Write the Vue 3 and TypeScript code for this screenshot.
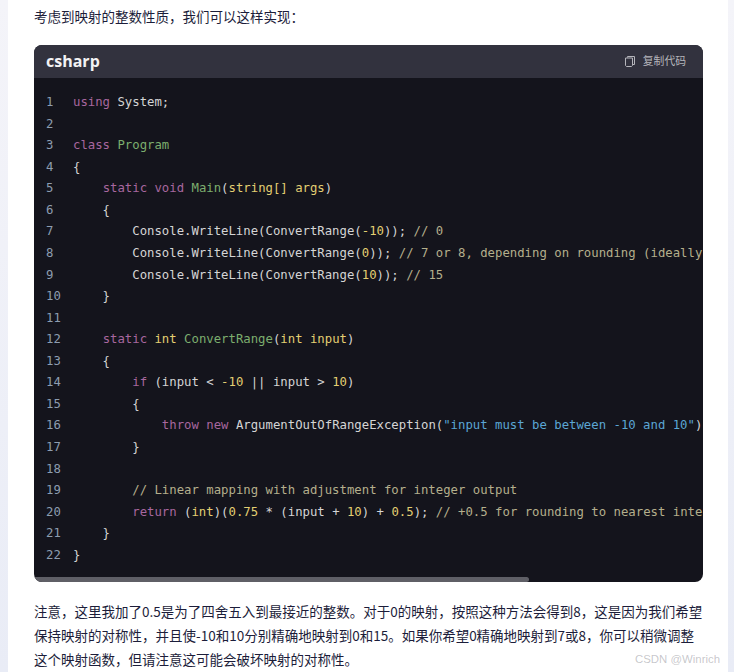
<script setup lang="ts">
type Tok = [string, string];
const k = (t: string): Tok => ['kw', t];
const p = (t: string): Tok => ['pl', t];
const y = (t: string): Tok => ['yl', t];
const g = (t: string): Tok => ['gr', t];
const c = (t: string): Tok => ['cm', t];
const s = (t: string): Tok => ['st', t];

const lines: Tok[][] = [
  [k('using'), p(' System;')],
  [],
  [k('class'), p(' '), g('Program')],
  [p('{')],
  [p('    '), k('static'), p(' '), k('void'), p(' '), g('Main'), p('('), y('string[] args'), p(')')],
  [p('    {')],
  [p('        Console.WriteLine(ConvertRange('), y('-10'), p(')); '), c('// 0')],
  [p('        Console.WriteLine(ConvertRange('), y('0'), p(')); '), c('// 7 or 8, depending on rounding (ideally')],
  [p('        Console.WriteLine(ConvertRange('), y('10'), p(')); '), c('// 15')],
  [p('    }')],
  [],
  [p('    '), k('static'), p(' '), y('int'), p(' '), g('ConvertRange'), p('('), y('int input'), p(')')],
  [p('    {')],
  [p('        '), k('if'), p(' (input < '), y('-10'), p(' || input > '), y('10'), p(')')],
  [p('        {')],
  [p('            '), k('throw'), p(' '), k('new'), p(' ArgumentOutOfRangeException('), s('"input must be between -10 and 10"'), p(')')],
  [p('        }')],
  [],
  [p('        '), c('// Linear mapping with adjustment for integer output')],
  [p('        '), k('return'), p(' ('), y('int'), p(')('), y('0.75'), p(' * (input + '), y('10'), p(') + '), y('0.5'), p('); '), c('// +0.5 for rounding to nearest inte')],
  [p('    }')],
  [p('}')],
];
</script>

<template>
  <div class="page">
    <article class="card">
      <p class="intro">考虑到映射的整数性质，我们可以这样实现：</p>
      <section class="block">
        <header class="head">
          <span class="lang">csharp</span>
          <span class="copy">
            <svg class="copy-icon" width="12" height="12" viewBox="0 0 12 12" fill="none" stroke="currentColor" stroke-width="1">
              <path d="M3.5 2.5V1.5H10.5V9.5H9" />
              <path d="M1.5 3H8.5V10.5L7.5 11.5H2.5L1.5 10.5Z" />
            </svg>
            复制代码
          </span>
        </header>
        <div class="body">
          <div v-for="(line, i) in lines" :key="i" class="row">
            <span class="num">{{ i + 1 }}</span>
            <code class="code"><span v-for="(t, j) in line" :key="j" :class="t[0]">{{ t[1] }}</span></code>
          </div>
          <div class="thumb"></div>
        </div>
      </section>
      <p class="note">注意，这里我加了0.5是为了四舍五入到最接近的整数。对于0的映射，按照这种方法会得到8，这是因为我们希望保持映射的对称性，并且使-10和10分别精确地映射到0和15。如果你希望0精确地映射到7或8，你可以稍微调整这个映射函数，但请注意这可能会破坏映射的对称性。</p>
      <span class="mark">CSDN @Winrich</span>
    </article>
  </div>
</template>

<style>
html, body { margin: 0; background: #eef0f8; }
</style>

<style scoped>
.page {
  height: 672px;
  overflow: hidden;
  padding: 0 6px 0 8px;
  background: linear-gradient(180deg, #f4f4f9 0%, #e9ecf6 100%);
  box-sizing: border-box;
}
.card {
  position: relative;
  height: 672px;
  background: #fff;
  padding: 4px 25px 0 26px;
  box-sizing: border-box;
  font-family: "Noto Sans CJK SC", "Liberation Sans", sans-serif;
  font-size: 13.5px;
  line-height: 24px;
  color: #1c1d3a;
}
.intro { margin: 0 0 17px; }
.note { margin: 17px 0 0; }
.block {
  border-radius: 8px;
  overflow: hidden;
  background: #14141c;
}
.head {
  height: 33px;
  background: #32323e;
  display: flex;
  align-items: center;
  justify-content: space-between;
  padding: 0 17px 0 12px;
}
.lang {
  font-family: "Open Sans", "Liberation Sans", sans-serif;
  font-size: 16px;
  line-height: 33px;
  font-weight: 700;
  color: #f2f2f4;
}
.copy {
  display: flex;
  align-items: center;
  gap: 7px;
  font-size: 10.8px;
  line-height: 29px;
  height: 33px;
  margin-top: -2px;
  color: #b5b5bb;
}
.copy-icon { display: block; }
.body {
  position: relative;
  height: 504px;
  padding-top: 14px;
  box-sizing: border-box;
  overflow: hidden;
}
.row {
  display: flex;
  height: 21.57px;
  line-height: 21.57px;
  font-family: "DejaVu Sans Mono", "Liberation Mono", monospace;
  font-size: 12.3px;
  white-space: pre;
}
.num {
  width: 39px;
  padding-left: 12px;
  box-sizing: border-box;
  flex: none;
  color: #8d9db0;
}
.code { font: inherit; }
.pl { color: #d5d5d5; }
.kw { color: #a8679f; }
.yl { color: #e3cf72; }
.gr { color: #7cae6e; }
.cm { color: #b4af8c; }
.st { color: #5ba6d4; }
.thumb {
  position: absolute;
  left: 0;
  bottom: 0;
  width: 495px;
  height: 5px;
  border-radius: 0 3px 3px 0;
  background: #5f5f66;
}
.mark {
  position: absolute;
  right: 8px;
  top: 651px;
  font-family: "Liberation Sans", sans-serif;
  font-size: 11.4px;
  line-height: 16px;
  color: rgba(120, 120, 130, 0.42);
}
</style>
